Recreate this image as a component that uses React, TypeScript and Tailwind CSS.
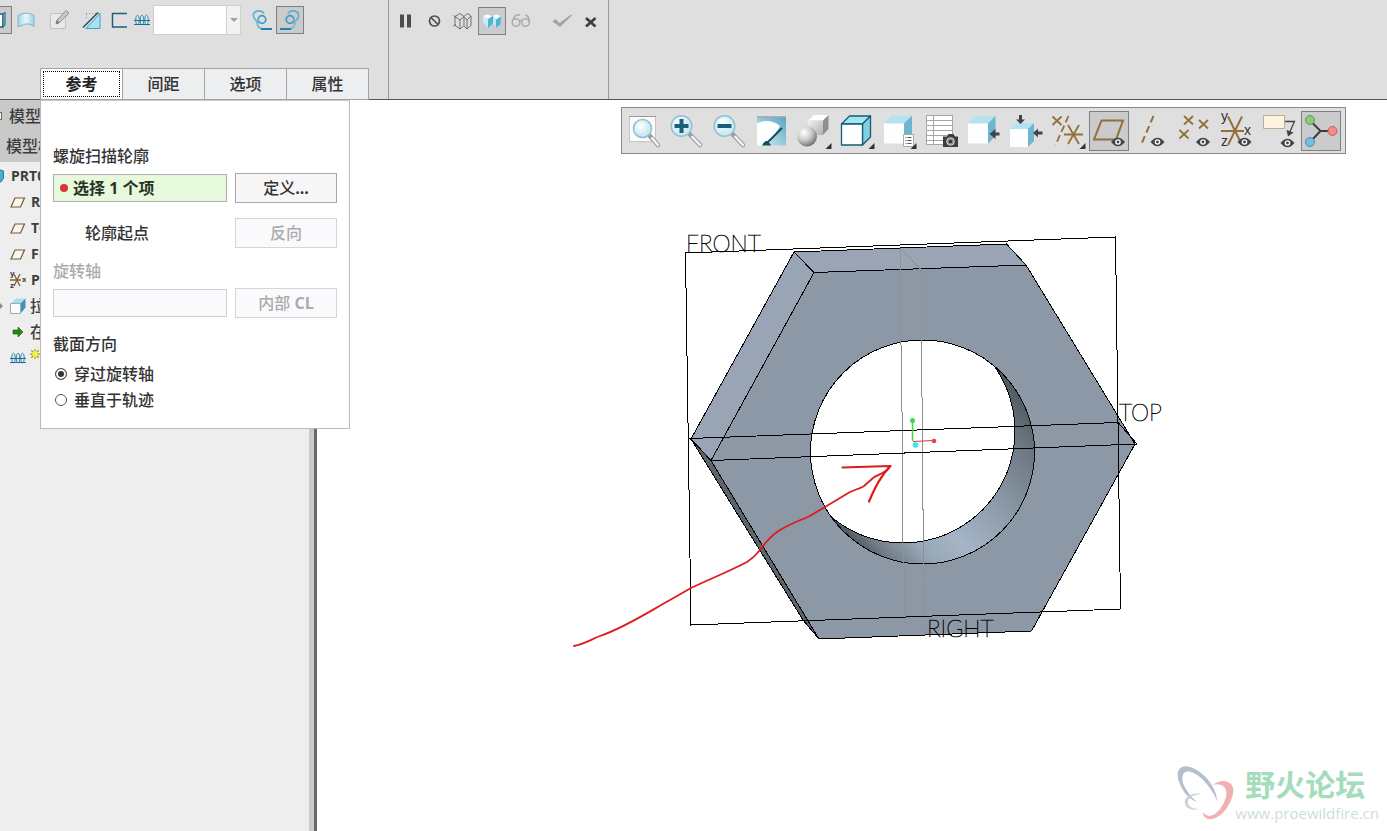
import React, { useState } from "react";

type IconProps = { children: React.ReactNode; className?: string; box?: string };

function Icon({ children, className = "size-7", box = "0 0 28 28" }: IconProps) {
  return (
    <svg viewBox={box} className={`block shrink-0 ${className}`} fill="none" aria-hidden="true">
      {children}
    </svg>
  );
}

type ToolProps = { label: string; pressed?: boolean; className?: string; children: React.ReactNode };

function Tool({ label, pressed = false, className = "w-7", children }: ToolProps) {
  return (
    <button
      type="button"
      aria-label={label}
      aria-pressed={pressed}
      className={`flex h-7 shrink-0 items-center justify-center ${className} ${
        pressed ? "bg-[#c9cbcd] outline outline-1 -outline-offset-1 outline-[#808080]" : ""
      }`}
    >
      {children}
    </button>
  );
}

function Coil() {
  return (
    <g stroke="#3f87a6" strokeWidth="1">
      <ellipse cx="3.5" cy="6" rx="1.800" ry="4.800" fill="#d5ecf4" />
      <ellipse cx="8" cy="6" rx="1.800" ry="4.800" fill="#d5ecf4" />
      <ellipse cx="12.5" cy="6" rx="1.800" ry="4.800" fill="#d5ecf4" />
      <path d="M0 6.5h16M0 10.5h16" stroke="#1f6b8c" />
    </g>
  );
}

function Hand({ mirror = false }: { mirror?: boolean }) {
  return (
    <Icon>
      <g transform={mirror ? "translate(28 0) scale(-1 1)" : undefined} strokeWidth="1.700">
        <path d="M16 7.500C14 4 7 4 5.500 8C4.500 12 8 15 11 17" stroke="#5fb0d0" />
        <circle cx="14" cy="13.500" r="3.800" stroke="#3b9cc4" />
        <path d="M10.500 13C7.500 17 9.500 22.500 15 23" stroke="#7ab9d2" />
        <path d="M13 23h11" stroke="#1785b5" strokeWidth="2" />
      </g>
    </Icon>
  );
}

function HeaderTools() {
  return (
    <div className="flex pt-1.5">
      <Tool label="实体" pressed className="-ml-4 w-7">
        <Icon>
          <path d="M8 8h11v13H8z" fill="#fff" stroke="#17637f" strokeWidth="1.500" />
          <path d="M19 8l2-2v13l-2 2z" fill="#7ecbe3" stroke="#17637f" />
        </Icon>
      </Tool>
      <Tool label="曲面">
        <Icon>
          <path d="M6 9.500c5-3 12-3 16 0v11c-4-3.500-9-3-12-1l-4 1z" fill="url(#surf)" stroke="#7fb4ca" />
        </Icon>
      </Tool>
      <Tool label="草绘" className="ml-1.5 w-7">
        <Icon>
          <path d="M4.500 7.500h15v15h-15z" fill="#e9e9e9" stroke="#c2c2c2" />
          <path d="M10 18l1-4L20 4.500l3 2.500-9.500 9.700z" fill="#c6c6c6" stroke="#909090" />
          <path d="M10 18l3.500-1.300-2.500-2.700z" fill="#777" />
        </Icon>
      </Tool>
      <Tool label="移除材料" className="ml-1 w-7">
        <Icon>
          <path d="M8 7.500h13M8.500 8v6" stroke="#c97c7c" strokeDasharray="1 2" />
          <path d="M22 7.500v15H8z" fill="#a4e4f5" stroke="#4d9db8" />
          <path d="M5 21.500L20 6.500" stroke="#28566a" strokeWidth="1.600" />
        </Icon>
      </Tool>
      <Tool label="截面" className="w-6">
        <Icon className="h-7 w-6" box="0 0 24 28">
          <path d="M21 7.500H6.500v13.500H21" stroke="#1d5f7a" strokeWidth="1.500" />
        </Icon>
      </Tool>
      <Tool label="螺距" className="w-[23px]">
        <Icon className="h-3 w-4" box="0 0 16 12">
          <Coil />
        </Icon>
      </Tool>
      <div className="relative -mt-px h-7.5 w-22 shrink-0">
        <select aria-label="螺距值" className="h-full w-full appearance-none border border-[#cfcfcf] bg-white pr-4 text-sm">
          <option value=""></option>
        </select>
        <span className="pointer-events-none absolute inset-y-px right-px flex w-3.5 items-center justify-center border-l border-[#cfcfcf] bg-[#f2f2f2]">
          <span className="border-x-4 border-t-4 border-x-transparent border-t-[#a2a2a2]" />
        </span>
      </div>
      <Tool label="左手定则" className="ml-[7px] w-7">
        <Hand />
      </Tool>
      <Tool label="右手定则" pressed>
        <Hand mirror />
      </Tool>
    </div>
  );
}

function ConfirmTools() {
  return (
    <div className="flex gap-px pl-0.5 pt-[7px]">
      <Tool label="暂停">
        <Icon>
          <path d="M9 7.500h4v13H9zM16 7.500h4v13h-4z" fill="#4d4d4f" />
        </Icon>
      </Tool>
      <Tool label="无预览">
        <Icon>
          <circle cx="14.500" cy="14" r="5" stroke="#505052" strokeWidth="1.700" />
          <path d="M11 10.500l7 7" stroke="#505052" strokeWidth="1.700" />
        </Icon>
      </Tool>
      <Tool label="分离预览">
        <Icon>
          <path
            d="M6 9.500l5-3 4 3 3-3 4 2M6 9.500v9l5 3.500v-9zM11 13l4-3.500v9L11 22M18 13l4-4v9.500M18 13v9l-3-3M15 9.500l3 3.500M4 19l3-1.500M22 18.500L18 22M4.500 8.500l3 2"
            stroke="#656567"
            strokeWidth=".9"
          />
        </Icon>
      </Tool>
      <Tool label="连接预览" pressed>
        <Icon>
          <path d="M5 9l5 3 5-3 3 2.500L23 9l-.5 8-4 3.500-3.500-4-5 4.500-5-5z" fill="#4db4d6" />
          <path d="M5 9l5 3v9l-5-5z" fill="#c6eef8" />
          <path d="M15 9.500l3 3v7.500l-3-3.500z" fill="#bfeaf5" />
          <path d="M5 9l4-1.500L14 9l-4 3zM15 9l3-1.500 5 1.500-5 3.500z" fill="#fff" />
        </Icon>
      </Tool>
      <Tool label="校验预览">
        <Icon>
          <g stroke="#ababad" strokeWidth="1.500">
            <circle cx="9" cy="15.500" r="3.800" />
            <circle cx="18.500" cy="15.500" r="3.800" />
            <path d="M12.500 14c.5-1 2-1 2.500 0M6 13c1-4 4-6 7-5M22.300 15.500c0-4-1-7-4-7.500" />
          </g>
        </Icon>
      </Tool>
      <Tool label="确定" className="ml-3 w-7">
        <Icon>
          <path d="M4.500 14.500l3-2.500 4 4L23 7.500l1 1L12 20z" fill="#a5a5a7" />
        </Icon>
      </Tool>
      <Tool label="取消" className="w-7">
        <Icon>
          <path d="M9 11l9.500 8.500M18.500 11L9 19.500" stroke="#3f3f41" strokeWidth="2.700" />
        </Icon>
      </Tool>
    </div>
  );
}

const tabs = ["参考", "间距", "选项", "属性"];

function Header() {
  const [active, setActive] = useState(0);
  return (
    <header className="flex border-b border-[#555] bg-[#dfdfdf]">
      <div className="flex w-[389px] shrink-0 flex-col border-r border-[#999]">
        <HeaderTools />
        <div role="tablist" className="relative z-10 -mb-px ml-10 mt-[33px] flex">
          {tabs.map((tab, i) => (
            <button
              key={tab}
              type="button"
              role="tab"
              aria-selected={i === active}
              onClick={() => setActive(i)}
              className={`-mr-px h-8 w-[83px] border border-[#a3a3a3] p-0.5 text-base leading-6 ${
                i === active ? "bg-white font-bold text-[#222]" : "bg-[#eceeef] font-medium text-[#333]"
              }`}
            >
              <span
                className={`flex h-full items-center justify-center ${
                  i === active ? "border border-dotted border-black" : ""
                }`}
              >
                {tab}
              </span>
            </button>
          ))}
        </div>
      </div>
      <div className="w-[220px] shrink-0 border-r border-[#999]">
        <ConfirmTools />
      </div>
    </header>
  );
}

function PlaneIcon() {
  return (
    <Icon className="size-4" box="0 0 16 16">
      <path d="M5 4h9.500L10.500 13H1z" fill="#fbf7ec" stroke="#6e5c3a" strokeWidth="1.200" />
    </Icon>
  );
}

const tree: { label: string; icon: React.ReactNode }[] = [
  { label: "RI", icon: <PlaneIcon /> },
  { label: "TO", icon: <PlaneIcon /> },
  { label: "FR", icon: <PlaneIcon /> },
  {
    label: "PR",
    icon: (
      <Icon className="h-5 w-4" box="0 0 16 20">
        <path d="M0 10h11M4 4l6 12M10 4L4 16" stroke="#806032" strokeWidth="1.300" />
        <g fill="#333" fontFamily="Liberation Sans, sans-serif" fontSize="8">
          <text x="0" y="6">y</text>
          <text x="12" y="12">x</text>
          <text x="0" y="18">z</text>
        </g>
      </Icon>
    ),
  },
  {
    label: "拉",
    icon: (
      <Icon className="size-4" box="0 0 16 16">
        <path d="M1 5.500L6 .5h9.500l-5 5z" fill="#a9dceb" />
        <path d="M10.500 5.500l5-5v9l-5 6z" fill="#4193b3" />
        <path d="M.5 5.500h10v10H.5z" fill="#fafcfc" stroke="#93aeb7" />
      </Icon>
    ),
  },
  {
    label: "在",
    icon: (
      <Icon className="size-4" box="0 0 16 16">
        <path d="M3 6h5V3l5 5-5 5v-3H3z" fill="#238813" stroke="#14590b" strokeWidth=".6" />
      </Icon>
    ),
  },
];

function Sidebar() {
  return (
    <aside className="w-[317px] shrink-0 overflow-hidden border-r-[3px] border-[#696969] bg-[#eee] text-[#3e3e3e]">
      <div className="min-h-full border-r-[5px] border-[#cacaca]">
        <div className="bg-[#c9c9c9] pt-px text-base font-medium leading-7.5">
          <div className="flex items-center gap-2">
            <span className="h-1.5 w-px bg-white outline outline-1 outline-[#666]" />
            <span>模型</span>
          </div>
          <div className="h-[31px] pl-1.5">模型树</div>
        </div>
        <ul className="pt-px text-sm font-bold leading-[26px]">
          <li className="flex items-center gap-[7px]">
            <Icon className="h-3.5 w-1" box="0 0 4 14">
              <path d="M-2 2l3-1 2.500 1v7L1 13l-3-1z" fill="#4aafd0" stroke="#2a7893" />
            </Icon>
            <span>PRT0</span>
          </li>
          {tree.map((item, i) => (
            <li key={item.label} className="flex items-center">
              <span className="w-2.5 shrink-0">
                {i === 4 && <span className="block w-0 border-y-3 border-l-3 border-y-transparent border-l-[#8a8a8a]" />}
              </span>
              {item.icon}
              <span className={i > 3 ? "pl-1 text-base font-medium leading-[26px]" : "pl-[5px]"}>{item.label}</span>
            </li>
          ))}
          <li className="flex h-[26px] items-center pl-2.5">
            <Icon className="h-3 w-4" box="0 0 16 12">
              <Coil />
            </Icon>
            <Icon className="mb-2 ml-1 size-2.5" box="0 0 8 8">
              <path d="M4 0v8M0 4h8M1 1l6 6M7 1L1 7" stroke="#a79c14" />
              <circle cx="4" cy="4" r="2.200" fill="#fbf432" />
            </Icon>
          </li>
        </ul>
      </div>
    </aside>
  );
}

function PanelButton({ children, disabled = false }: { children: React.ReactNode; disabled?: boolean }) {
  return (
    <button
      type="button"
      disabled={disabled}
      className={`h-7.5 w-[102px] border font-medium ${
        disabled ? "border-[#d3d3d8] bg-[#fafafd] text-[#ababab]" : "border-[#a8a8a8] bg-[#f6f6f7] text-[#333]"
      }`}
    >
      {children}
    </button>
  );
}

function ReferencePanel() {
  const [direction, setDirection] = useState("through");
  const options = [
    { id: "through", label: "穿过旋转轴" },
    { id: "normal", label: "垂直于轨迹" },
  ];
  return (
    <section
      role="tabpanel"
      aria-label="参考"
      className="absolute left-10 top-0 z-10 w-[310px] border border-t-[#c8c8c8] border-[#b9b9b9] bg-white px-3 pb-[15px] pt-[43px] text-base font-medium leading-6 text-[#333]"
    >
      <label htmlFor="profile" className="block">
        螺旋扫描轮廓
      </label>
      <div className="mt-[5px] flex items-center gap-2">
        <div className="flex h-7 w-[174px] items-center border border-[#b0b0b0] bg-[#e6fadb] pl-1.5">
          <span className="size-2 shrink-0 rounded-full bg-[#d8373a]" />
          <input
            id="profile"
            readOnly
            value="选择 1 个项"
            className="ml-[5px] min-w-0 flex-1 bg-transparent font-bold text-[#2a3328] outline-none"
          />
        </div>
        <PanelButton>
          定义<b>...</b>
        </PanelButton>
      </div>
      <div className="mt-[15px] flex items-center justify-between">
        <span className="pl-8">轮廓起点</span>
        <PanelButton disabled>反向</PanelButton>
      </div>
      <label htmlFor="axis" className="mt-[11px] block text-[#ababab]">
        旋转轴
      </label>
      <div className="mt-[5px] flex items-center gap-2">
        <input id="axis" disabled className="h-7 w-[174px] border border-[#cdcdd3] bg-[#fafafd]" />
        <PanelButton disabled>
          内部 <b>CL</b>
        </PanelButton>
      </div>
      <fieldset className="mt-[14px]">
        <legend className="mb-[5px]">截面方向</legend>
        {options.map((o) => (
          <label key={o.id} className="flex h-[26px] items-center gap-[7px] pl-0.5">
            <input
              type="radio"
              name="direction"
              checked={direction === o.id}
              onChange={() => setDirection(o.id)}
              className="size-3 appearance-none rounded-full border border-[#555] bg-white checked:bg-[#333] checked:shadow-[inset_0_0_0_2px_white]"
            />
            {o.label}
          </label>
        ))}
      </fieldset>
    </section>
  );
}

function Eye({ x, y }: { x: number; y: number }) {
  return (
    <g>
      <path d={`M${x - 7} ${y}q7-8.500 14 0q-7 8.500-14 0z`} fill="#3e4448" />
      <circle cx={x} cy={y} r="2.800" fill="#fff" />
      <circle cx={x} cy={y} r="1.400" fill="#3e4448" />
    </g>
  );
}

function Cube({ x, y, s, d, outline = false }: { x: number; y: number; s: number; d: number; outline?: boolean }) {
  const stroke = outline ? "#145c74" : "none";
  return (
    <g stroke={stroke} strokeWidth="1.300" strokeLinejoin="round">
      <path d={`M${x} ${y}l${d}-${d}h${s}l-${d} ${d}z`} fill={outline ? "#a4e4f3" : "#b4e3f0"} />
      <path d={`M${x + s} ${y}l${d}-${d}v${s}l-${d} ${d}z`} fill={outline ? "#7fd0e6" : "#6fb5cd"} />
      <path d={`M${x} ${y}h${s}v${s}h-${s}z`} fill="#fdfeff" />
    </g>
  );
}

const corner = <path d="M38.500 32v6H32.500z" fill="#333" />;

function Lens({ x, y, r }: { x: number; y: number; r: number }) {
  return (
    <g>
      <path d={`M${x + r * 0.8} ${y + r * 0.8}L34 34`} stroke="#9b9b9f" strokeWidth="4.500" strokeLinecap="round" />
      <path d={`M${x + r * 0.8 + 2.5} ${y + r * 0.8 + 2.5}L34 34`} stroke="#f4f4f5" strokeWidth="2.500" strokeLinecap="round" />
      <circle cx={x} cy={y} r={r} fill="url(#glass)" stroke="#92c0d1" strokeWidth="1.500" />
    </g>
  );
}

const viewTools: { label: string; pressed?: boolean; art: React.ReactNode }[] = [
  {
    label: "重新调整",
    art: (
      <>
        <path d="M5.500 5.500h26v25h-26z" fill="#fbfbfb" stroke="#c5c5c5" />
        <path d="M5 5.500h27" stroke="#999" />
        <Lens x={18.5} y={17.5} r={9} />
      </>
    ),
  },
  {
    label: "放大",
    art: (
      <>
        <Lens x={15.5} y={15} r={10.3} />
        <path d="M15.500 8v14M8.500 15h14" stroke="#17617c" strokeWidth="4" />
      </>
    ),
  },
  {
    label: "缩小",
    art: (
      <>
        <Lens x={15.5} y={15} r={10.3} />
        <path d="M8.500 15h14" stroke="#17617c" strokeWidth="4" />
      </>
    ),
  },
  {
    label: "重画",
    art: (
      <>
        <path d="M6 5.500h29v29H6z" fill="url(#paint)" />
        <path d="M6 12q13-5 23 3L17 34.500H6z" fill="#fff" />
        <path d="M6 6h29" stroke="#9aabb3" strokeWidth="1.500" />
        <path d="M31 17L16 32" stroke="#164c63" strokeWidth="2" />
        <path d="M11 34.500q4.500-9 9 0z" fill="#164c63" />
      </>
    ),
  },
  {
    label: "着色",
    art: (
      <>
        <path d="M15 9.500l6-5.500h14.500L30 9.500z" fill="#fff" />
        <path d="M15 9.500h15V24H15z" fill="url(#side)" />
        <path d="M30 9.500L35.500 4v14L30 24z" fill="#8f8f8f" />
        <circle cx="14" cy="25.500" r="10" fill="url(#ball)" />
        {corner}
      </>
    ),
  },
  { label: "显示样式", art: <><Cube x={5.500} y={13} s={21} d={8} outline />{corner}</> },
  {
    label: "已保存方向",
    art: (
      <>
        <Cube x={6} y={12.5} s={20} d={8} />
        <path d="M25.500 23.500h10v12h-10z" fill="#fff" stroke="#aaa" />
        <path d="M27.500 26.500h1m1 0h4m-6 3h1m1 0h4m-6 3h1m1 0h4" stroke="#555" />
        {corner}
      </>
    ),
  },
  {
    label: "视图管理器",
    art: (
      <>
        <path d="M6.500 4.500h26v29h-26z" fill="#fff" />
        <path d="M6.500 9.500h26m-26 5h26m-26 5h26m-26 5h26m-26 5h26M13.500 4.500v29M6.500 4.500h26v29h-26z" stroke="#a6a6a6" />
        <path d="M23 25.500h4l1.500-2.500h5l1.500 2.500h3V36H23z" fill="#3b3f42" />
        <circle cx="30.500" cy="30.500" r="3.800" fill="#888" stroke="#ddd" />
        <circle cx="30.500" cy="30.500" r="1.500" fill="#222" />
      </>
    ),
  },
  {
    label: "视图法向",
    art: (
      <>
        <Cube x={5} y={12.500} s={20} d={7.500} />
        <path d="M26.500 23l6-5v3.500h4v3h-4V28z" fill="#42434b" />
      </>
    ),
  },
  {
    label: "标准方向",
    art: (
      <>
        <Cube x={5} y={18} s={18} d={6} />
        <path d="M15.500 13L11 8.500h3V4h3v4.500h3zM28 22l5-4.500v3h4.500v3H33v3z" fill="#42434b" />
      </>
    ),
  },
  {
    label: "基准显示过滤器",
    art: (
      <>
        <g stroke="#93703a" strokeWidth="1.800">
          <path d="M5.500 5.500l9 8.500M14.500 5.500l-9 8.500M17 23.500h19M21 14l11 19M32 14L21 33" />
          <path d="M21.500 5L8.500 34" strokeDasharray="7 3.500" />
        </g>
        {corner}
      </>
    ),
  },
  {
    label: "平面显示",
    pressed: true,
    art: (
      <>
        <path d="M12.500 9.500H34L27 28.500H5z" stroke="#93703a" strokeWidth="2" />
        <Eye x={29} y={31} />
      </>
    ),
  },
  {
    label: "轴显示",
    art: (
      <>
        <path d="M21.500 5L9 34" stroke="#93703a" strokeWidth="2" strokeDasharray="7 4" />
        <Eye x={25.5} y={31} />
      </>
    ),
  },
  {
    label: "点显示",
    art: (
      <>
        <path
          d="M10 5l9 8.500M19 5l-9 8.500M25 9l9 8.500M34 9l-9 8.500M5.500 19l9 8.500M14.500 19l-9 8.500"
          stroke="#93703a"
          strokeWidth="1.800"
        />
        <Eye x={29} y={31} />
      </>
    ),
  },
  {
    label: "坐标系显示",
    art: (
      <>
        <path d="M5 20h23M12 5.500L25 32M26 5.500L12 34" stroke="#93703a" strokeWidth="2" />
        <g fill="#333" fontFamily="Liberation Sans, sans-serif" fontSize="14">
          <text x="5" y="10">y</text>
          <text x="28" y="24">x</text>
          <text x="5" y="35">z</text>
        </g>
        <Eye x={28.5} y={31} />
      </>
    ),
  },
  {
    label: "注释显示",
    art: (
      <>
        <path d="M4.500 4.500h21v13h-21z" fill="#fff4df" stroke="#b9ad98" />
        <path d="M26 10.500h9.500l-4.500 10" stroke="#444" strokeWidth="1.300" />
        <path d="M27.500 19l7 2.500-5.500 4z" fill="#3d4145" />
        <Eye x={28.5} y={32} />
      </>
    ),
  },
  {
    label: "旋转中心",
    pressed: true,
    art: (
      <>
        <path d="M9 9.500L19.500 20 9 31M19.500 20H31" stroke="#3c3c3e" strokeWidth="2" />
        <circle cx="9" cy="9" r="4.500" fill="#8dc87b" stroke="#609f52" />
        <circle cx="9" cy="31" r="4.500" fill="#77bfe0" stroke="#448dae" />
        <circle cx="31.500" cy="20" r="4.500" fill="#f38c88" stroke="#c9605e" />
      </>
    ),
  },
];

function ViewToolbar() {
  return (
    <div
      role="toolbar"
      aria-label="视图"
      className="absolute right-[41px] top-[7px] flex w-[725px] justify-between border border-[#888] bg-[#dfdfdf] pb-0.5 pl-0.5 pr-1 pt-[3px]"
    >
      {viewTools.map((t) => (
        <button
          key={t.label}
          type="button"
          aria-label={t.label}
          aria-pressed={!!t.pressed}
          className={`size-10 shrink-0 ${
            t.pressed ? "bg-[#c9cbcd] outline outline-1 -outline-offset-1 outline-[#808080]" : ""
          }`}
        >
          <Icon className="size-10" box="0 0 40 40">
            {t.art}
          </Icon>
        </button>
      ))}
    </div>
  );
}

function Model() {
  return (
    <svg viewBox="560 220 610 440" className="absolute left-[243px] top-[120px] h-[440px] w-[610px]" fill="none" role="img" aria-label="六角螺母">
      <defs>
        <linearGradient id="wall" gradientUnits="userSpaceOnUse" x1="996" y1="366" x2="832" y2="519">
          <stop offset="0" stopColor="#4f5860" />
          <stop offset=".15" stopColor="#6c7781" />
          <stop offset=".4" stopColor="#8a99a8" />
          <stop offset=".65" stopColor="#a6b5c6" />
          <stop offset=".8" stopColor="#98a7b6" />
          <stop offset=".93" stopColor="#727d88" />
          <stop offset="1" stopColor="#4f5860" />
        </linearGradient>
        <clipPath id="bore">
          <circle cx="922.500" cy="452" r="112" />
        </clipPath>
      </defs>
      <g shapeRendering="crispEdges" stroke="#000" strokeWidth="1">
        <path d="M691 439L794 252L814 272.500L711 460.500z" fill="#99a4b4" />
        <path d="M794 252L1006.500 244L1026 265L814 272.500z" fill="#99a4b4" />
        <path d="M691 439L711 460.500L819 639L803 620z" fill="#5d656c" />
        <path d="M814 272.500L1026 265L1135 444L1031.500 631L819 639L711 460.500z" fill="#8d98a6" />
        <circle cx="922.500" cy="452" r="112" fill="url(#wall)" />
        <g clipPath="url(#bore)">
          <circle cx="903" cy="431" r="112" fill="#fff" />
        </g>
        <circle cx="922.500" cy="452" r="112" />
        <path d="M901.500 345l1.500 198M921.500 340l2 224" stroke="#8e8e8e" />
        <path d="M900 248v97M921.500 270v70M903.500 543l1.500 72M923.500 564l2 70M900 248l21.500 22M905 615l20.500 19" stroke="#8b939b" />
        <path d="M685.500 253L1115.500 237L1120.500 609L691 625z" />
        <path d="M690 438.500L1118 422.500L1137 444L711 460.500z" />
      </g>
      <g fill="#000" stroke="#000" strokeWidth=".6" fontFamily="Lato, sans-serif" fontWeight="200" fontSize="23">
        <text x="686" y="252">FRONT</text>
        <text x="1119" y="421">TOP</text>
        <text x="927" y="637">RIGHT</text>
      </g>
      <path d="M912.500 441v-20" stroke="#3fd64a" strokeWidth="1.500" />
      <path d="M913 441.500l21-1" stroke="#c23a3f" strokeWidth="1.200" />
      <circle cx="912.500" cy="420.500" r="2.500" fill="#3fd64a" />
      <circle cx="934" cy="441" r="2.300" fill="#e2434b" />
      <circle cx="915.500" cy="445" r="2.800" fill="#3fe0f0" />
      <g stroke="#dd1c1c" strokeWidth="1.800" strokeLinecap="round" strokeLinejoin="round">
        <path d="M574 646C584 644 590 640 600 636C626 627 650 611 670 600L691 588C710 579 730 571 747 562C753 558 757 554 760 550C765 543 770 537 777 532C787 525 798 521 808 517L825 507L850 492C857 489 861 488 864 486L873 478C878 474 885 474 889 467" />
        <path d="M842.500 467.500L890.500 466C881 476 876 485 869 501.500" strokeWidth="2.200" />
      </g>
    </svg>
  );
}

function Watermark() {
  return (
    <div className="absolute bottom-2 right-2 flex items-end">
      <Icon className="h-15 w-15" box="0 0 60 60">
        <path d="M5 21C-1 9 5 1 15 4C31 9 42 27 42 38C39 29 27 12 16 9C9 7 6 12 8 20C11 28 17 35 22 39C14 36 8 29 5 21z" fill="#b3bfce" />
        <path d="M38 22C47 14 61 18 58 31C55 45 43 58 33 56C30 55 28 53 28 49C30 53 35 54 40 51C48 45 53 33 51 27C49 22 44 20 38 22z" fill="#f0b0b4" />
        <path d="M27 31C17 29 8 34 10 41C11 45 17 48 24 46C17 46 13 43 13 39C13 35 19 31 27 31z" fill="#ccd3d7" />
      </Icon>
      <div className="flex flex-col items-start">
        <span className="ml-2.5 text-[30px] font-bold leading-9 text-[#a5dcbb]">野火论坛</span>
        <span className="text-[15px] font-normal leading-5 text-[#cbdde2]">www.proewildfire.cn</span>
      </div>
    </div>
  );
}

export default function App() {
  return (
    <div className="flex min-h-screen flex-col bg-white font-['Open_Sans','Noto_Sans_CJK_SC',sans-serif]">
      <svg className="absolute size-0" aria-hidden="true">
        <defs>
          <linearGradient id="surf">
            <stop offset="0" stopColor="#9fd6e8" />
            <stop offset=".5" stopColor="#e6f7fb" />
            <stop offset="1" stopColor="#9dd3e6" />
          </linearGradient>
          <radialGradient id="glass" cx=".4" cy=".35">
            <stop offset="0" stopColor="#fff" />
            <stop offset="1" stopColor="#cdeaf3" />
          </radialGradient>
          <linearGradient id="paint" x1="0" y1="1" x2="1" y2="0">
            <stop offset="0" stopColor="#d7eef5" />
            <stop offset="1" stopColor="#58a5c0" />
          </linearGradient>
          <linearGradient id="side" x1="0" y1="0" x2="1" y2="1">
            <stop offset="0" stopColor="#f2f2f2" />
            <stop offset="1" stopColor="#b0b0b0" />
          </linearGradient>
          <radialGradient id="ball" cx=".35" cy=".3" r=".75">
            <stop offset="0" stopColor="#fff" />
            <stop offset=".5" stopColor="#ccc" />
            <stop offset="1" stopColor="#6c6c6c" />
          </radialGradient>
        </defs>
      </svg>
      <Header />
      <main className="relative flex flex-1">
        <Sidebar />
        <ReferencePanel />
        <div className="relative min-w-0 flex-1 overflow-hidden">
          <Model />
          <ViewToolbar />
          <Watermark />
        </div>
      </main>
    </div>
  );
}
